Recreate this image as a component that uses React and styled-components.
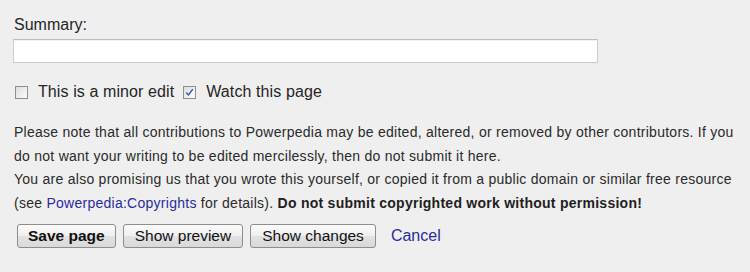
import React from "react";
import styled, { createGlobalStyle } from "styled-components";

const Global = createGlobalStyle`
  html, body { margin: 0; padding: 0; background: #efefef; }
  body { font-family: "Liberation Sans", Arial, sans-serif; color: #222; }
`;

const Form = styled.div`
  padding: 16px 13px 0 13px;
  width: 724px;
`;

const Label = styled.div`
  font-size: 16px;
  line-height: 18px;
  color: #252525;
  padding-left: 1px;
`;

const Input = styled.div`
  margin-top: 5px;
  width: 583px;
  height: 22px;
  background: #fff;
  border: 1px solid #cdcdcd;
  border-top-color: #bdbdbd;
  box-shadow: inset 0 1px 1px rgba(0, 0, 0, 0.06);
`;

const CheckRow = styled.div`
  margin-top: 20px;
  display: flex;
  align-items: center;
  height: 18px;
  font-size: 16px;
  line-height: 18px;
  color: #252525;
`;

const Box = styled.span`
  box-sizing: border-box;
  width: 13px;
  height: 13px;
  margin: 0 10px 0 ${(p) => p.$ml}px;
  border: 1px solid #8e8f8f;
  background: linear-gradient(135deg, #dcdcdc 0%, #f4f4f4 70%, #fdfdfd 100%);
  display: inline-flex;
  align-items: center;
  justify-content: center;
  flex: none;
`;

const CheckText = styled.span`
  margin-right: ${(p) => p.$mr || 0}px;
  letter-spacing: 0.1px;
`;

const Note = styled.div`
  margin-top: 20px;
  font-size: 14px;
  line-height: 23.5px;
  color: #2a2a2a;
  padding-left: 1px;
  letter-spacing: 0.26px;
  white-space: nowrap;
`;

const Link = styled.a`
  color: #2b2ba0;
  text-decoration: none;
`;

const Bold = styled.b`
  font-weight: bold;
  color: #1e1e1e;
`;

const Buttons = styled.div`
  margin-top: 9px;
  display: flex;
  align-items: center;
  padding-left: 4px;
`;

const Button = styled.button`
  box-sizing: border-box;
  height: 24px;
  margin-right: 7px;
  padding: 0 ${(p) => p.$px}px;
  font-family: "Liberation Sans", Arial, sans-serif;
  font-size: 15.5px;
  font-weight: ${(p) => (p.$bold ? "bold" : "normal")};
  color: #111;
  border: 1px solid #8d8d8d;
  border-radius: 3px;
  background: linear-gradient(to bottom, #fbfbfb 0%, #efefef 50%, #e2e2e2 51%, #d9d9d9 100%);
  line-height: 20px;
  cursor: pointer;
`;

const Cancel = styled.a`
  margin-left: 8px;
  font-size: 16px;
  color: #2b2ba0;
  text-decoration: none;
`;

function Check({ checked, ml }) {
  return (
    <Box $ml={ml}>
      {checked && (
        <svg width="9" height="9" viewBox="0 0 9 9">
          <path d="M1.2 4.6 L3.4 7 L7.8 1.2" fill="none" stroke="#3b4fa8" strokeWidth="1.4" />
        </svg>
      )}
    </Box>
  );
}

export default function App() {
  return (
    <>
      <Global />
      <Form>
        <Label>Summary:</Label>
        <Input />
        <CheckRow>
          <Check ml={2} />
          <CheckText $mr={9}>This is a minor edit</CheckText>
          <Check checked ml={0} />
          <CheckText>Watch this page</CheckText>
        </CheckRow>
        <Note>
          Please note that all contributions to Powerpedia may be edited, altered, or removed by other contributors. If you
          <br />
          do not want your writing to be edited mercilessly, then do not submit it here.
          <br />
          You are also promising us that you wrote this yourself, or copied it from a public domain or similar free resource
          <br />
          (see <Link href="#">Powerpedia:Copyrights</Link> for details). <Bold>Do not submit copyrighted work without permission!</Bold>
        </Note>
        <Buttons>
          <Button $bold $px={10}>Save page</Button>
          <Button $px={11}>Show preview</Button>
          <Button $px={11}>Show changes</Button>
          <Cancel href="#">Cancel</Cancel>
        </Buttons>
      </Form>
    </>
  );
}
